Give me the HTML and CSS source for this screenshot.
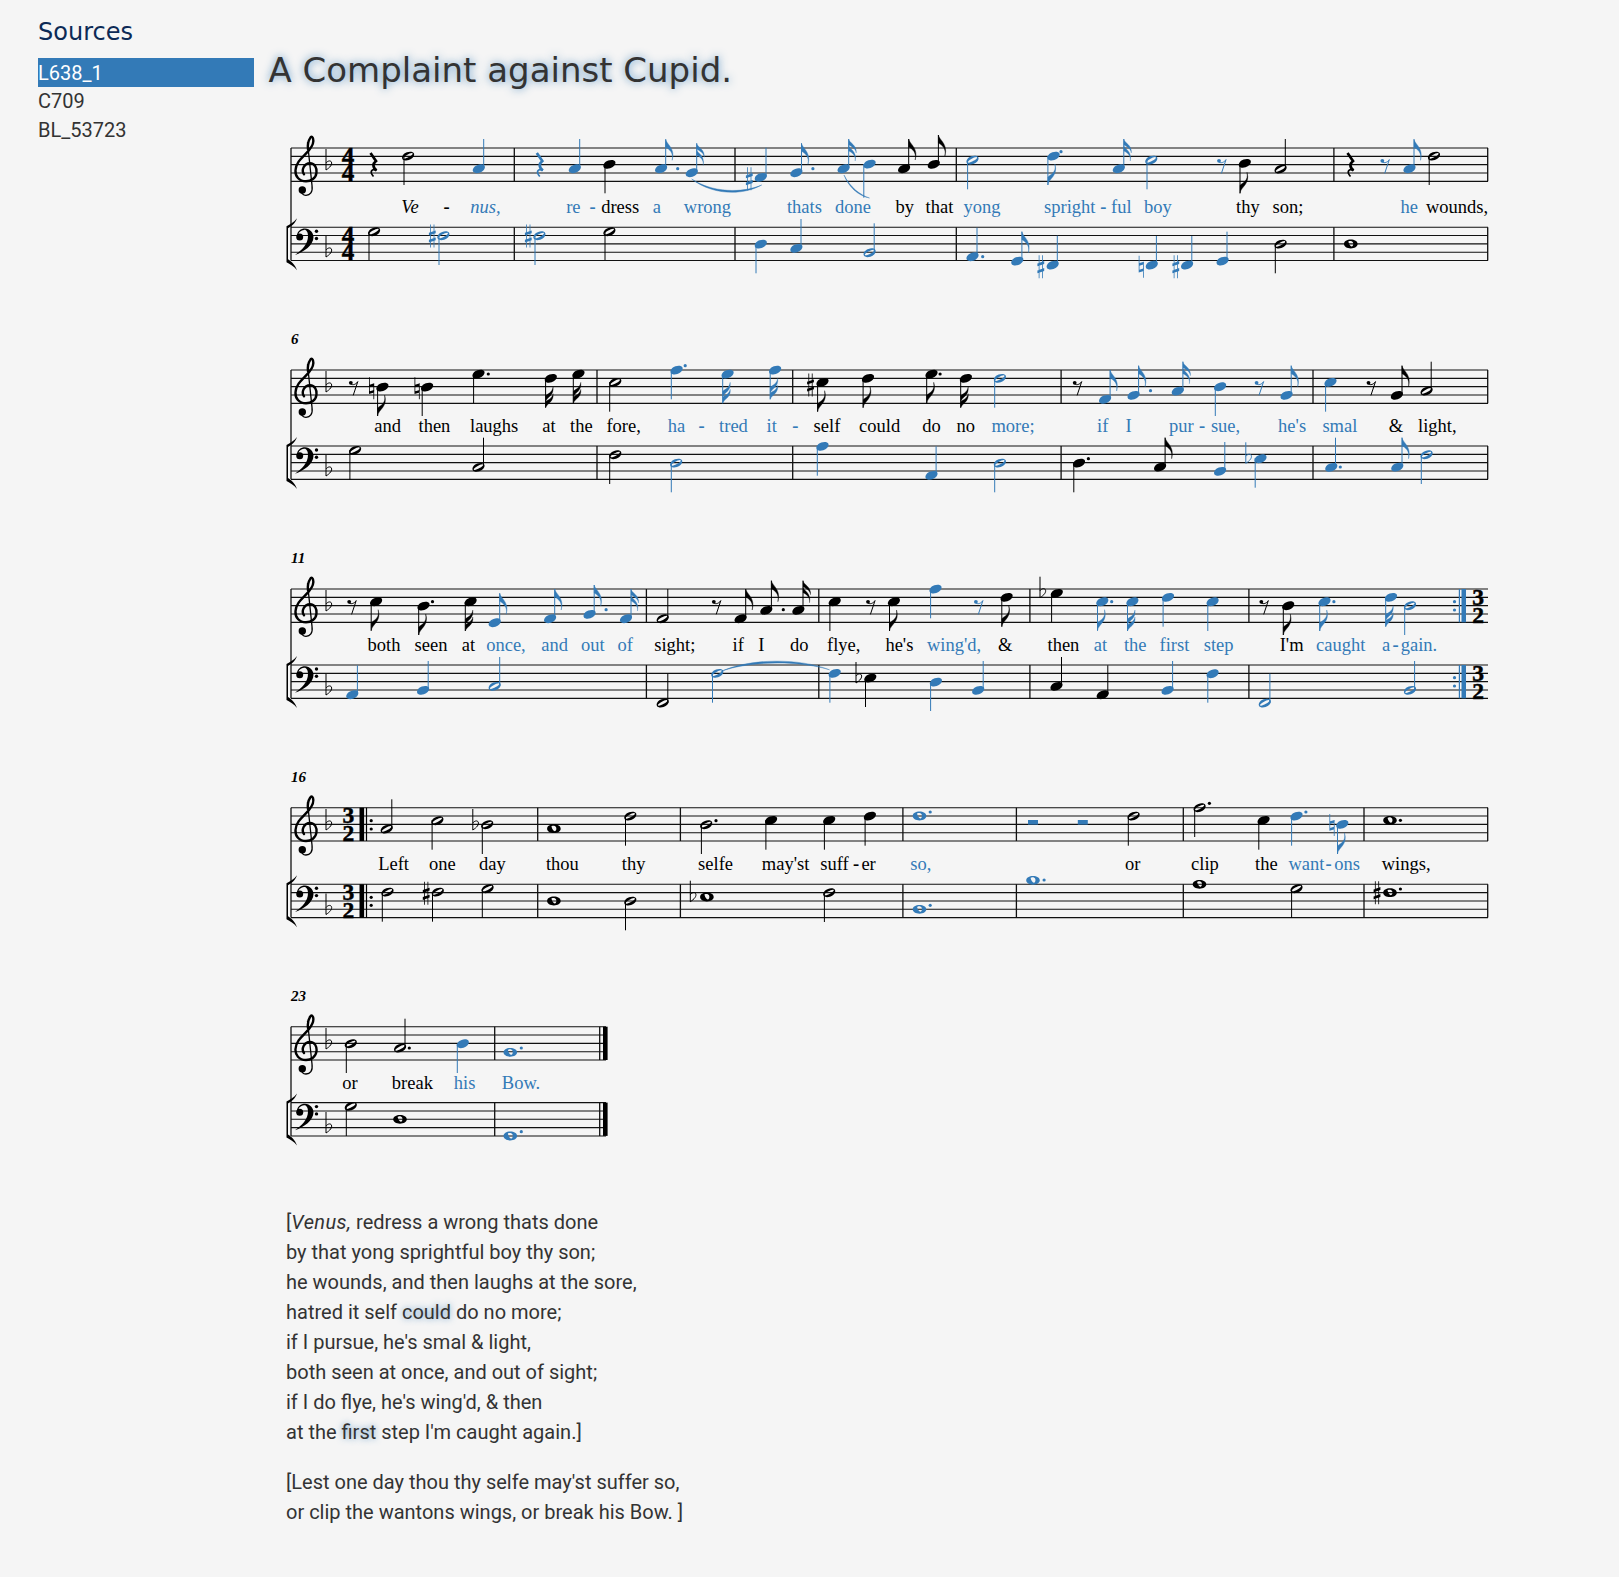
FILE: index.html
```html
<!DOCTYPE html>
<html lang="en">
<head>
<meta charset="utf-8">
<title>A Complaint against Cupid.</title>
<link rel="stylesheet" href="styles.css">
</head>
<body>
<svg class="glyphs" width="0" height="0" aria-hidden="true">
<defs>
<path id="staff" class="staffline" d="M0 0H1197M0 8.33H1197M0 16.67H1197M0 25H1197M0 33.33H1197"/>
<path id="staff-short" class="staffline" d="M0 0H315M0 8.33H315M0 16.67H315M0 25H315M0 33.33H315"/>
<g id="treble">
<path fill="none" stroke="#000" stroke-width="1.3" d="M16.5 -5.7L21 37.3C22 44.3 19 47.3 15 47.3C12 47.3 10 45.3 10.5 42.3"/>
<circle fill="#000" cx="11.3" cy="42" r="3.7"/>
<path fill="none" stroke="#000" stroke-width="2.4" stroke-linecap="round" d="M13 26.3C10 22.3 13 15.3 19 15.3C24 15.3 26 20.3 25.5 24.3C25 30.3 20 33.3 15 33.3C8 33.3 4 28.3 4.5 22.3C5 13.3 13 8.3 18 2.3C22 -2.7 23 -6.7 22 -9.7C21 -11.7 20 -11.7 19 -9.7C17 -6.7 16.5 -2.7 17 1.3"/>
</g>
<g id="bass" fill="#000">
<path d="M6 8.7C6 3.7 10 1.2 14 1.2C19 1.2 22.5 5.7 22.5 9.7C22.5 17.7 13 24.7 4 27.7C11 22.7 17 16.7 17 8.7C17 4.7 15 2.2 13 2.7C10 3.2 8 4.7 7.5 6.7Z"/>
<circle cx="8.7" cy="9.7" r="3.5"/>
<circle cx="25.5" cy="4" r="1.7"/>
<circle cx="25.5" cy="11.3" r="1.7"/>
</g>
<path id="bracket" fill="#000" d="M-4.5 -1C-1 -3 3 -5 6 -9C4 -3 0 -1 -3 1V32C0 34 4 37 6 43C3 39 -1 37 -4.5 35Z"/>
<path id="q" d="M-5.6 2.9C-7 .2 -4 -2.9 -1.1 -3.8C2.2 -4.9 5.3 -4.3 6 -2.5C6.9 .2 3.8 3.1 .9 4C-2.2 4.9 -4.9 4.3 -5.6 2.9Z"/>
<path id="h" fill-rule="evenodd" d="M-5.6 2.9C-7 .2 -4 -2.9 -1.1 -3.8C2.2 -4.9 5.3 -4.3 6 -2.5C6.9 .2 3.8 3.1 .9 4C-2.2 4.9 -4.9 4.3 -5.6 2.9ZM-4.5 2.4C-3.6 3.2 -1.1 2 1.1 .8C3.4 -.4 5 -1.7 4.6 -2.6C4 -3.5 1.3 -2.4 -1.1 -1.1C-3.4 .2 -5.2 1.5 -4.5 2.4Z"/>
<path id="w" fill-rule="evenodd" d="M-6.8 0C-6.8 -2.6 -3.7 -4.4 0 -4.4C3.7 -4.4 6.8 -2.6 6.8 0C6.8 2.6 3.7 4.4 0 4.4C-3.7 4.4 -6.8 2.6 -6.8 0ZM-2.4 -2.2C-1.6 .8 -.2 2.8 1.2 2.4C2.5 2 2.8 -.4 2.1 -1.8C1.4 -3 -.6 -3.2 -1.5 -2.9C-2 -2.7 -2.5 -2.5 -2.4 -2.2Z"/>
<circle id="d" r="1.6"/>
<path id="f8u" stroke="currentColor" stroke-width=".4" d="M0 0C.8 5 10 9 6.5 21C8 13 3.5 10 0 8Z"/>
<path id="f8d" stroke="currentColor" stroke-width=".4" d="M0 0C1 -7 10.5 -9 7 -21C8.5 -12 3 -11 0 -8Z"/>
<path id="f16u" stroke="currentColor" stroke-width=".3" d="M0 0C.5 4 8.5 6 7.5 14C7.3 10 3 7.5 0 6ZM0 6.5C.5 10 8.5 12 6.5 22C7.2 16 3 13.5 0 12Z"/>
<path id="f16d" stroke="currentColor" stroke-width=".3" d="M0 0C2 -5 8.5 -6 7.5 -14C6.5 -9 2 -8 0 -6ZM0 -6.5C2 -11 8.5 -12 7.5 -21C6.5 -15 2 -14 0 -12Z"/>
<path id="flat" fill="none" stroke="currentColor" stroke-width="1" d="M0 -16V5C4 2.5 6.5 -.5 5.4 -3C4.3 -5 1.5 -4 0 -2"/>
<path id="sharp" d="M-2.1 -11.5H-1.3V11.5H-2.1ZM1.3 -11.5H2.1V11.5H1.3ZM-3.4 -3.2L3.4 -5.6V-2.8L-3.4 -.4ZM-3.4 3.8L3.4 1.4V4.2L-3.4 6.6Z"/>
<path id="natural" d="M-2.6 -11H-1.8V5H-2.6ZM1.8 -5H2.6V11H1.8ZM-2.6 -3.4L2.6 -5V-2.4L-2.6 -.8ZM-2.6 3.2L2.6 1.6V4.2L-2.6 5.8Z"/>
<g id="r4" fill="none" stroke="currentColor">
<path stroke-width="2.7" d="M-2.5 -11.5L3 -3.5C0 -1 -1 2 3.5 6"/>
<path stroke-width="1.7" d="M3.5 6C-1 3.5 -4 7 .5 12"/>
</g>
<g id="r8">
<circle cx="-3" cy="-5.2" r="1.9"/>
<path fill="none" stroke="currentColor" stroke-width="1" d="M-3 -4C-1 -2.6 2 -3.4 4 -6.4L-.6 7.4"/>
</g>
</defs>
</svg>
<div class="page">
<aside class="sidebar">
<h2 class="sources-title">Sources</h2>
<ul class="sources">
<li class="source active">L638_1</li>
<li class="source">C709</li>
<li class="source">BL_53723</li>
</ul>
</aside>
<main class="main">
<h1 class="title">A Complaint against Cupid.</h1>

<svg class="system s1" viewBox="270 120 1230 210">
<use href="#staff" x="291" y="148"/><use href="#staff" x="291" y="227.2"/>
<path class="bars" d="M291 148V260.5M514.3 148V181.3M514.3 227.2V260.5M735 148V181.3M735 227.2V260.5M956.3 148V181.3M956.3 227.2V260.5M1333.9 148V181.3M1333.9 227.2V260.5M1487.7 148V181.3M1487.7 227.2V260.5"/>
<use href="#treble" x="291" y="148"/><use href="#bass" x="291" y="227.2"/><use href="#bracket" x="291" y="227.2"/>
<g class="ink">
<use href="#flat" x="326" y="165"/><use href="#flat" x="326" y="252"/>
<text class="meter" x="348" y="142.5">44</text>
<text class="meter" x="348" y="221.7">44</text>
<use href="#r4" x="373" y="164.5"/>
<use href="#h" x="408" y="156"/><use href="#q" x="609.3" y="164.3"/>
<use href="#q" x="904" y="168.7"/><use href="#f8u" x="908.7" y="139"/>
<use href="#q" x="933.7" y="164.3"/><use href="#f8u" x="938.4" y="135"/>
<use href="#q" x="1244.7" y="163.3"/><use href="#f8d" x="1240" y="193.3"/>
<use href="#h" x="1280.5" y="169"/>
<use href="#r4" x="1350" y="164.5"/>
<use href="#h" x="1433.9" y="156"/>
<use href="#h" x="374" y="231.7"/><use href="#h" x="609.3" y="231.7"/>
<use href="#h" x="1280.5" y="244"/><use href="#w" x="1350.8" y="244"/>
<path class="stems" d="M404 156V185M605 164V193.3M908.7 168V139M938.4 164V135M1240 164V193.3M1285.3 168V139M1429.2 156V185M369 232V260M605 232V260M1275.3 244V273.3"/>
</g>
<g class="blue">
<use href="#q" x="478.7" y="168.7"/><use href="#r4" x="539.3" y="164.5"/>
<use href="#q" x="574.7" y="168.7"/>
<use href="#q" x="661" y="168.7"/><use href="#f8u" x="665.7" y="139.3"/><use href="#d" x="677.7" y="168.7"/>
<use href="#q" x="691.7" y="172.7"/><use href="#f16u" x="696.7" y="143.3"/>
<use href="#sharp" x="749.3" y="178.7"/><use href="#q" x="760.7" y="177.3"/>
<use href="#q" x="796.3" y="172.7"/><use href="#f8u" x="801.5" y="143.3"/><use href="#d" x="812.9" y="168.7"/>
<use href="#q" x="843.5" y="168.7"/><use href="#f16u" x="848.7" y="139"/>
<use href="#q" x="869.5" y="164"/>
<use href="#h" x="972.4" y="160"/>
<use href="#q" x="1053.5" y="156"/><use href="#f8d" x="1047.9" y="185"/><use href="#d" x="1061" y="151.7"/>
<use href="#q" x="1118.7" y="168.7"/><use href="#f16u" x="1123.8" y="139"/>
<use href="#h" x="1151.2" y="160"/>
<use href="#r8" x="1222" y="166"/><use href="#r8" x="1385.3" y="166"/>
<use href="#q" x="1409.4" y="168.7"/><use href="#f8u" x="1414" y="139.3"/>
<use href="#sharp" x="432.3" y="236"/><use href="#h" x="443.3" y="235.7"/>
<use href="#sharp" x="528.3" y="236"/><use href="#h" x="539.3" y="235.7"/>
<use href="#q" x="760.7" y="244"/><use href="#q" x="796.3" y="248.3"/><use href="#h" x="869.5" y="252.7"/>
<use href="#q" x="972.4" y="256.7"/><use href="#d" x="982.7" y="256.7"/>
<use href="#q" x="1017.2" y="261"/><use href="#f8u" x="1021.9" y="231.7"/>
<use href="#sharp" x="1040.8" y="266.7"/><use href="#q" x="1052.6" y="265"/>
<use href="#natural" x="1141.3" y="266.7"/><use href="#q" x="1151.7" y="265"/>
<use href="#sharp" x="1175.8" y="266.7"/><use href="#q" x="1187" y="265"/>
<use href="#q" x="1222.5" y="261"/>
<path class="stems" d="M483.7 168V139M579.7 168V139M665.7 168V139.3M696.7 172V143.3M766 177V147.7M801.5 172V143.3M848.7 168V139M863.8 164V197.7M967.6 160V189.3M1047.9 156V185M1123.8 168V139M1147 160V189.3M1414 168V139.3M439 236V265M535 236V265M756 244V273.3M801 248V219M874.2 252V223.3M977 256V227.7M1021.9 260V231.7M1057.3 264V235.7M1156.4 264V236M1191.8 264V236M1227 260V231.7"/>
<path class="slur" d="M691.7 179C712 195 742 196 761.7 185C742 193.5 712 192.5 691.7 179Z"/>
<path class="slur" d="M844 175C848 186 858 196 869.5 198C860 195 850 187 844 175Z"/>
</g>
<text class="lyric it" x="401.7" y="212.7">Ve</text><text class="lyric hy" x="444" y="212.7">-</text>
<text class="lyric it b" x="470.7" y="212.7">nus,</text>
<text class="lyric b" x="566.7" y="212.7">re</text><text class="lyric hy b" x="590" y="212.7">-</text>
<text class="lyric" x="601.7" y="212.7">dress</text>
<text class="lyric b" x="653.3" y="212.7">a</text><text class="lyric b" x="684.3" y="212.7">wrong</text>
<text class="lyric b" x="787.4" y="212.7">thats</text><text class="lyric b" x="835.5" y="212.7">done</text>
<text class="lyric" x="895.9" y="212.7">by</text><text class="lyric" x="926.1" y="212.7">that</text>
<text class="lyric b" x="963.9" y="212.7">yong</text><text class="lyric b" x="1044.6" y="212.7">spright</text>
<text class="lyric hy b" x="1100.7" y="212.7">-</text><text class="lyric b" x="1111.6" y="212.7">ful</text>
<text class="lyric b" x="1144.6" y="212.7">boy</text>
<text class="lyric" x="1236.6" y="212.7">thy</text><text class="lyric" x="1273" y="212.7">son;</text>
<text class="lyric b" x="1400.9" y="212.7">he</text><text class="lyric" x="1426.4" y="212.7">wounds,</text>
</svg>

<svg class="system s2" viewBox="270 330 1230 219">
<use href="#staff" x="291" y="370"/><use href="#staff" x="291" y="446"/>
<path class="bars" d="M291 370V479.3M597 370V403.3M597 446V479.3M792.7 370V403.3M792.7 446V479.3M1061.1 370V403.3M1061.1 446V479.3M1313 370V403.3M1313 446V479.3M1487.7 370V403.3M1487.7 446V479.3"/>
<use href="#treble" x="291" y="370"/><use href="#bass" x="291" y="446"/><use href="#bracket" x="291" y="446"/>
<text class="measure" x="291" y="344">6</text>
<g class="ink">
<use href="#flat" x="326" y="387"/><use href="#flat" x="326" y="471"/>
<use href="#r8" x="353.8" y="388"/>
<use href="#natural" x="371.6" y="388.3"/><use href="#q" x="382.3" y="387"/><use href="#f8d" x="377.6" y="416"/>
<use href="#natural" x="417.1" y="388.3"/><use href="#q" x="427" y="387"/>
<use href="#q" x="478.4" y="374"/><use href="#d" x="488.3" y="374"/>
<use href="#q" x="550.7" y="378.3"/><use href="#f16d" x="545.6" y="407.7"/>
<use href="#q" x="578.4" y="374"/><use href="#f16d" x="573.3" y="403.3"/>
<use href="#h" x="615.2" y="382.3"/>
<use href="#sharp" x="810.5" y="385"/><use href="#q" x="822.4" y="382.3"/><use href="#f8d" x="817.6" y="411.7"/>
<use href="#q" x="867.9" y="378.3"/><use href="#f8d" x="863.1" y="407.7"/>
<use href="#q" x="931.4" y="374"/><use href="#f8d" x="926.7" y="403.3"/><use href="#d" x="940.1" y="374"/>
<use href="#q" x="965.8" y="378.3"/><use href="#f16d" x="960.7" y="407.7"/>
<use href="#r8" x="1077.7" y="388"/><use href="#r8" x="1371.5" y="388"/>
<use href="#q" x="1396.8" y="395.3"/><use href="#f8u" x="1402" y="365.7"/>
<use href="#h" x="1426.5" y="391"/>
<use href="#h" x="355" y="450.3"/><use href="#h" x="478.4" y="467.3"/><use href="#h" x="615.2" y="454.7"/>
<use href="#q" x="1078.9" y="463"/><use href="#d" x="1088.4" y="458.7"/>
<use href="#q" x="1160" y="467"/><use href="#f8u" x="1165.1" y="437.7"/>
<path class="stems" d="M377.6 387V416M422.2 387V416M473.6 374V403.3M545.6 378V407.7M573.3 374V403.3M609.7 382V411.7M817.6 382V411.7M863.1 378V407.7M926.7 374V403.3M960.7 378V407.7M1402 395V365.7M1431.2 391V361.7M349.9 450V479.7M483.5 467V437.7M609.7 455V484M1073.8 463V492.3M1165.1 467V437.7"/>
</g>
<g class="blue">
<use href="#q" x="676.5" y="370"/><use href="#d" x="685.2" y="365.7"/>
<use href="#q" x="727.5" y="374"/><use href="#f16d" x="722.7" y="403.3"/>
<use href="#q" x="775" y="370"/><use href="#f16d" x="770.2" y="399.3"/>
<use href="#h" x="999.8" y="378.3"/>
<use href="#q" x="1105" y="399.3"/><use href="#f8u" x="1110.1" y="370"/>
<use href="#q" x="1133.5" y="395.3"/><use href="#f8u" x="1138.6" y="365.7"/><use href="#d" x="1150.5" y="390.7"/>
<use href="#q" x="1177.7" y="391"/><use href="#f16u" x="1182.9" y="361.7"/>
<use href="#q" x="1220" y="386.7"/><use href="#r8" x="1259.6" y="388"/>
<use href="#q" x="1286.5" y="395.3"/><use href="#f8u" x="1291.2" y="365.7"/>
<use href="#q" x="1330.4" y="382.3"/>
<use href="#h" x="676.1" y="463"/><use href="#q" x="822.4" y="446.3"/><use href="#q" x="931.4" y="475.3"/>
<use href="#h" x="999.8" y="463"/><use href="#q" x="1220" y="471.3"/>
<use href="#flat" x="1245.8" y="458.3"/><use href="#q" x="1260.4" y="458.7"/>
<use href="#q" x="1331.2" y="467.3"/><use href="#d" x="1340.3" y="467"/>
<use href="#q" x="1397.2" y="467"/><use href="#f8u" x="1402" y="437.7"/>
<use href="#h" x="1426.5" y="454.7"/>
<path class="stems" d="M671.3 370V399.3M722.7 374V403.3M770.2 370V399.3M994.7 378V407.7M1110.1 399V370M1138.6 395V365.7M1182.9 391V361.7M1215.3 386V416M1291.2 395V365.7M1325.6 382V411.7M671.3 463V492.3M817.3 446V475.7M936.1 475V446.3M994.7 463V492.3M1224.8 471V442M1255.2 458V487.7M1335.5 467V437.7M1402 467V437.7M1421.3 455V484"/>
</g>
<text class="lyric" x="374.8" y="431.7">and</text><text class="lyric" x="419" y="431.7">then</text>
<text class="lyric" x="470.5" y="431.7">laughs</text><text class="lyric" x="542.8" y="431.7">at</text>
<text class="lyric" x="570.5" y="431.7">the</text><text class="lyric" x="606.9" y="431.7">fore,</text>
<text class="lyric b" x="668.2" y="431.7">ha</text><text class="lyric hy b" x="699" y="431.7">-</text>
<text class="lyric b" x="719.6" y="431.7">tred</text><text class="lyric b" x="767" y="431.7">it</text>
<text class="lyric hy b" x="792.7" y="431.7">-</text><text class="lyric" x="814.1" y="431.7">self</text>
<text class="lyric" x="859.6" y="431.7">could</text><text class="lyric" x="922.7" y="431.7">do</text>
<text class="lyric" x="957.1" y="431.7">no</text><text class="lyric b" x="991.9" y="431.7">more;</text>
<text class="lyric b" x="1097.5" y="431.7">if</text><text class="lyric b" x="1126" y="431.7">I</text>
<text class="lyric b" x="1169.4" y="431.7">pur</text><text class="lyric hy b" x="1199.5" y="431.7">-</text>
<text class="lyric b" x="1211.4" y="431.7">sue,</text><text class="lyric b" x="1278.6" y="431.7">he's</text>
<text class="lyric b" x="1322.9" y="431.7">smal</text><text class="lyric" x="1389.3" y="431.7">&amp;</text>
<text class="lyric" x="1418.5" y="431.7">light,</text>
</svg>

<svg class="system s3" viewBox="270 549 1230 219">
<use href="#staff" x="291" y="589"/><use href="#staff" x="291" y="665"/>
<path class="bars" d="M291 589V698.3M646.4 589V622.3M646.4 665V698.3M818.8 589V622.3M818.8 665V698.3M1029.9 589V622.3M1029.9 665V698.3M1248.9 589V622.3M1248.9 665V698.3"/>
<use href="#treble" x="291" y="589"/><use href="#bass" x="291" y="665"/><use href="#bracket" x="291" y="665"/>
<text class="measure" x="291" y="563">11</text>
<g class="ink">
<use href="#flat" x="326" y="606"/><use href="#flat" x="326" y="690"/>
<use href="#r8" x="352.2" y="607"/>
<use href="#q" x="376" y="601.7"/><use href="#f8d" x="371.2" y="630.7"/>
<use href="#q" x="423.4" y="606"/><use href="#f8d" x="418.7" y="635"/><use href="#d" x="432.5" y="601.7"/>
<use href="#q" x="470.5" y="601.7"/><use href="#f16d" x="465.3" y="631"/>
<use href="#h" x="662.6" y="618.7"/><use href="#r8" x="716.8" y="607"/>
<use href="#q" x="740.5" y="618.7"/><use href="#f8u" x="745.7" y="589"/>
<use href="#q" x="766.2" y="610.3"/><use href="#f8u" x="771.4" y="580.7"/><use href="#d" x="783.3" y="609.7"/>
<use href="#q" x="798.3" y="610.3"/><use href="#f16u" x="803" y="580.7"/>
<use href="#q" x="834.6" y="601.7"/><use href="#r8" x="871" y="607"/>
<use href="#q" x="893.8" y="601.7"/><use href="#f8d" x="889.5" y="631"/>
<use href="#q" x="1006.5" y="597.3"/><use href="#f8d" x="1001.8" y="626.7"/>
<use href="#flat" x="1040" y="592.7"/><use href="#q" x="1056.7" y="593.3"/>
<use href="#r8" x="1264.3" y="607"/>
<use href="#q" x="1288.1" y="605.7"/><use href="#f8d" x="1283.3" y="635"/>
<text class="meter triple" x="1478" y="583.6">32</text>
<text class="meter triple" x="1478" y="659.6">32</text>
<use href="#h" x="662.6" y="703"/>
<use href="#flat" x="856" y="678"/><use href="#q" x="870.2" y="678"/>
<use href="#q" x="1056.4" y="686.3"/><use href="#q" x="1102.6" y="694.7"/>
<path class="stems" d="M371.2 602V630.7M418.7 606V635M465.3 602V631M667.8 618V589M745.7 618V589M771.4 610V580.7M803 610V580.7M829.9 602V631M889.5 602V631M1001.8 597V626.7M1051.6 593V622.3M1283.3 606V635M667.8 703V673.7M865.5 678V707M1061.5 686V657M1107.8 694V665.3"/>
</g>
<g class="blue">
<use href="#q" x="494.6" y="622.7"/><use href="#f8u" x="499.7" y="593.3"/>
<use href="#q" x="550" y="618.7"/><use href="#f8u" x="554.7" y="589"/>
<use href="#q" x="589.5" y="614.3"/><use href="#f8u" x="594.2" y="585"/><use href="#d" x="606.1" y="609.7"/>
<use href="#q" x="625.9" y="618.7"/><use href="#f16u" x="631" y="589"/>
<use href="#q" x="935.4" y="589"/><use href="#r8" x="978.9" y="607"/>
<use href="#q" x="1102.2" y="601.7"/><use href="#f8d" x="1097.5" y="630.7"/><use href="#d" x="1111.7" y="601.7"/>
<use href="#q" x="1132.3" y="601.7"/><use href="#f16d" x="1127.5" y="631"/>
<use href="#q" x="1167.9" y="597.3"/><use href="#q" x="1212.5" y="601.7"/>
<use href="#q" x="1324.4" y="601.7"/><use href="#f8d" x="1319.7" y="631"/><use href="#d" x="1333.9" y="601.7"/>
<use href="#q" x="1390.9" y="597.3"/><use href="#f16d" x="1385.7" y="626.7"/>
<use href="#h" x="1409.9" y="605.7"/>
<use href="#d" x="1454.5" y="601.7"/><use href="#d" x="1454.5" y="610"/>
<use href="#d" x="1454.5" y="677.7"/><use href="#d" x="1454.5" y="686"/>
<rect x="1458.8" y="589" width="1.2" height="33.3"/><rect x="1461.5" y="589" width="4.5" height="33.3"/>
<rect x="1458.8" y="665" width="1.2" height="33.3"/><rect x="1461.5" y="665" width="4.5" height="33.3"/>
<use href="#q" x="352.2" y="694.7"/><use href="#q" x="423" y="690.3"/><use href="#h" x="494.6" y="686.3"/>
<use href="#h" x="717.2" y="673.3"/><use href="#q" x="834.6" y="673.3"/>
<use href="#q" x="935.8" y="682"/><use href="#q" x="978.1" y="690.3"/>
<use href="#q" x="1167.5" y="690.3"/><use href="#q" x="1212.5" y="673.7"/>
<use href="#h" x="1264.7" y="703"/><use href="#h" x="1409.9" y="690.3"/>
<path class="stems" d="M499.7 622V593.3M554.7 618V589M594.2 614V585M631 618V589M930.6 589V618.3M1097.5 602V630.7M1127.5 602V631M1163.1 597V626.7M1207.8 602V631M1319.7 602V631M1385.7 597V626.7M1404.7 606V635M357.4 694V665.3M428.2 690V661M499.7 686V657M712.5 673V702.7M829.9 673V702.7M930.6 682V711M983.2 690V661M1172.6 690V661M1207.8 674V702.7M1269.9 703V673.7M1414.6 690V661"/>
<path class="slur" d="M720.8 671.5C750 658 800 658 829.5 669.8C800 660.5 750 660.5 720.8 671.5Z"/>
</g>
<text class="lyric" x="368" y="650.7">both</text><text class="lyric" x="415.1" y="650.7">seen</text>
<text class="lyric" x="462.2" y="650.7">at</text><text class="lyric b" x="486.7" y="650.7">once,</text>
<text class="lyric b" x="541.7" y="650.7">and</text><text class="lyric b" x="581.6" y="650.7">out</text>
<text class="lyric b" x="618" y="650.7">of</text><text class="lyric" x="654.7" y="650.7">sight;</text>
<text class="lyric" x="733" y="650.7">if</text><text class="lyric" x="758.7" y="650.7">I</text>
<text class="lyric" x="790.4" y="650.7">do</text><text class="lyric" x="827.5" y="650.7">flye,</text>
<text class="lyric" x="885.9" y="650.7">he's</text><text class="lyric b" x="927.4" y="650.7">wing'd,</text>
<text class="lyric" x="998.6" y="650.7">&amp;</text><text class="lyric" x="1048" y="650.7">then</text>
<text class="lyric b" x="1094.3" y="650.7">at</text><text class="lyric b" x="1124.4" y="650.7">the</text>
<text class="lyric b" x="1160" y="650.7">first</text><text class="lyric b" x="1204.2" y="650.7">step</text>
<text class="lyric" x="1280.2" y="650.7">I'm</text><text class="lyric b" x="1316.5" y="650.7">caught</text>
<text class="lyric b" x="1382.6" y="650.7">a</text><text class="lyric hy b" x="1393" y="650.7">-</text>
<text class="lyric b" x="1401.2" y="650.7">gain.</text>
</svg>

<svg class="system s4" viewBox="270 768 1230 219">
<use href="#staff" x="291" y="807.7"/><use href="#staff" x="291" y="884.3"/>
<path class="bars" d="M291 807.7V917.6M537.7 807.7V841M537.7 884.3V917.6M680.4 807.7V841M680.4 884.3V917.6M902.9 807.7V841M902.9 884.3V917.6M1016.4 807.7V841M1016.4 884.3V917.6M1183.3 807.7V841M1183.3 884.3V917.6M1364 807.7V841M1364 884.3V917.6M1487.7 807.7V841M1487.7 884.3V917.6"/>
<use href="#treble" x="291" y="807.7"/><use href="#bass" x="291" y="884.3"/><use href="#bracket" x="291" y="884.3"/>
<text class="measure" x="291" y="782">16</text>
<g class="ink">
<use href="#flat" x="326" y="825"/><use href="#flat" x="326" y="909.5"/>
<text class="meter triple" x="348.3" y="802.1">32</text>
<text class="meter triple" x="348.3" y="878.7">32</text>
<rect x="359.5" y="807.7" width="4.6" height="33.3"/><rect x="365.9" y="807.7" width="1.2" height="33.3"/>
<rect x="359.5" y="884.3" width="4.6" height="33.3"/><rect x="365.9" y="884.3" width="1.2" height="33.3"/>
<use href="#d" x="371.2" y="820.7"/><use href="#d" x="371.2" y="829"/><use href="#d" x="371.2" y="897.3"/><use href="#d" x="371.2" y="905.3"/>
<use href="#h" x="386.6" y="829"/><use href="#h" x="437.3" y="820.7"/>
<use href="#flat" x="472.8" y="825"/><use href="#h" x="487.1" y="824.7"/>
<use href="#w" x="553.9" y="828.7"/><use href="#h" x="630.2" y="816"/>
<use href="#h" x="706.1" y="824.7"/><use href="#d" x="716" y="820.7"/>
<use href="#q" x="771" y="820.3"/><use href="#q" x="829.1" y="820.3"/><use href="#q" x="869.8" y="816"/>
<use href="#h" x="1133.5" y="816"/>
<use href="#h" x="1199.5" y="807.7"/><use href="#d" x="1209.4" y="803.3"/>
<use href="#q" x="1263.5" y="820.3"/>
<use href="#w" x="1390" y="820.3"/><use href="#d" x="1400.4" y="820.3"/>
<use href="#h" x="387.4" y="892"/><use href="#sharp" x="426.2" y="893.3"/><use href="#h" x="437.7" y="892"/>
<use href="#h" x="487.5" y="888.7"/><use href="#w" x="553.9" y="901"/><use href="#h" x="630.2" y="901"/>
<use href="#flat" x="690.3" y="896.7"/><use href="#w" x="706.9" y="897"/>
<use href="#h" x="829.1" y="892.7"/><use href="#w" x="1199.5" y="884.3"/>
<use href="#h" x="1296.4" y="888.7"/>
<use href="#sharp" x="1377" y="892.7"/><use href="#w" x="1390" y="892.7"/><use href="#d" x="1400.4" y="889"/>
<path class="stems" d="M391.8 829V799.3M432.1 820V849.7M482.3 824V854M625.5 816V845.7M701.4 824V854M765.9 820V849.7M824.4 820V849.7M865.1 816V845.7M1128.3 816V845.7M1194.7 808V837M1258.8 820V849.7M382.3 892V921.7M432.5 892V921.7M482.3 889V918M625.5 901V930.3M824.4 893V922M1291.6 889V918"/>
</g>
<g class="blue">
<use href="#w" x="919.5" y="816"/><use href="#d" x="930.2" y="812"/>
<rect x="1028" y="820" width="10" height="4.6"/><rect x="1077.8" y="820" width="10" height="4.6"/>
<use href="#q" x="1296.4" y="816"/><use href="#d" x="1305.9" y="812"/>
<use href="#natural" x="1332" y="825"/><use href="#q" x="1342.2" y="824.3"/><use href="#f8d" x="1337.5" y="854"/>
<use href="#w" x="919.5" y="909.3"/><use href="#d" x="930.2" y="905.3"/>
<use href="#w" x="1033" y="880.3"/><use href="#d" x="1044.1" y="880"/>
<path class="stems" d="M1291.6 816V845.7M1337.5 824V854"/>
</g>
<text class="lyric" x="378.7" y="870">Left</text><text class="lyric" x="429.4" y="870">one</text>
<text class="lyric" x="479.6" y="870">day</text><text class="lyric" x="546.4" y="870">thou</text>
<text class="lyric" x="622.3" y="870">thy</text><text class="lyric" x="698.6" y="870">selfe</text>
<text class="lyric" x="762.3" y="870">may'st</text><text class="lyric" x="820.8" y="870">suff</text>
<text class="lyric hy" x="853.6" y="870">-</text><text class="lyric" x="861.9" y="870">er</text>
<text class="lyric b" x="910.8" y="870">so,</text><text class="lyric" x="1125.5" y="870">or</text>
<text class="lyric" x="1191.6" y="870">clip</text><text class="lyric" x="1255.6" y="870">the</text>
<text class="lyric b" x="1288.9" y="870">want</text><text class="lyric hy b" x="1326" y="870">-</text>
<text class="lyric b" x="1334.7" y="870">ons</text><text class="lyric" x="1382.2" y="870">wings,</text>
</svg>

<svg class="system s5" viewBox="270 987 1230 173">
<use href="#staff-short" x="291" y="1026.7"/><use href="#staff-short" x="291" y="1102.6"/>
<path class="bars" d="M291 1026.7V1135.9M494.7 1026.7V1060M494.7 1102.6V1135.9M599.7 1026.7V1060M599.7 1102.6V1135.9"/>
<use href="#treble" x="291" y="1026.7"/><use href="#bass" x="291" y="1102.6"/><use href="#bracket" x="291" y="1102.6"/>
<text class="measure" x="291" y="1001">23</text>
<g class="ink">
<use href="#flat" x="326" y="1044"/><use href="#flat" x="326" y="1128"/>
<rect x="603" y="1026.7" width="4.6" height="33.3"/><rect x="603" y="1102.6" width="4.6" height="33.3"/>
<use href="#h" x="350.7" y="1043.7"/>
<use href="#h" x="400" y="1048"/><use href="#d" x="409.3" y="1048"/>
<use href="#h" x="350.7" y="1106.3"/><use href="#w" x="400" y="1119.3"/>
<path class="stems" d="M346.3 1044V1073M405 1048V1018.7M346.3 1106V1136"/>
</g>
<g class="blue">
<use href="#q" x="462.7" y="1043.7"/>
<use href="#w" x="510.3" y="1052.3"/><use href="#d" x="521.3" y="1048"/>
<use href="#w" x="510.3" y="1136"/><use href="#d" x="521.3" y="1131.7"/>
<path class="stems" d="M457.3 1044V1073"/>
</g>
<text class="lyric" x="342.7" y="1088.7">or</text><text class="lyric" x="392.3" y="1088.7">break</text>
<text class="lyric b" x="454.3" y="1088.7">his</text><text class="lyric b" x="502.3" y="1088.7">Bow.</text>
</svg>

<section class="poem">
<p>[<em>Venus,</em> redress a wrong thats done<br>by that yong sprightful boy thy son;<br>he wounds, and then laughs at the sore,<br>hatred it self <span class="hl">could</span> do no more;<br>if I pursue, he's smal &amp; light,<br>both seen at once, and out of sight;<br>if I do flye, he's wing'd, &amp; then<br>at the <span class="hl">first</span> step I'm caught again.]</p>
<p>[Lest one day thou thy selfe may'st suffer so,<br>or clip the wantons wings, or break his Bow. ]</p>
</section>
</main>
</div>
</body>
</html>
```
FILE: styles.css
```css
html, body {
  margin: 0;
  background: #f5f5f5;
}
body {
  color: #333;
  font-family: Roboto, "Liberation Sans", sans-serif;
  font-size: 20px;
  line-height: 30px;
}
.glyphs {
  display: block;
}
.page {
  display: flex;
  align-items: flex-start;
  min-height: 1577px;
}
.sidebar {
  flex: 0 0 270px;
  box-sizing: border-box;
  padding: 16px 16px 0 38px;
}
.sources-title {
  margin: 0 0 9px;
  font: 400 24px/33px "DejaVu Sans", sans-serif;
  color: #0c2a56;
}
.sources {
  list-style: none;
  margin: 0;
  padding: 0;
}
.source {
  height: 29px;
  line-height: 29px;
}
.source.active {
  background: #337ab7;
  color: #fff;
  line-height: 30px;
}
.main {
  flex: 1 1 auto;
  min-width: 0;
}
.title {
  margin: 0 0 0 -1.5px;
  height: 120px;
  box-sizing: border-box;
  padding-top: 47px;
  font: 400 34px/46px "DejaVu Sans", sans-serif;
  color: #333;
  text-shadow: 0 0 8px rgba(51, 122, 183, .8);
}
.system {
  display: block;
  width: 1230px;
}
.s1 { height: 210px; }
.s2, .s3, .s4 { height: 219px; }
.s5 { height: 173px; }
.staffline {
  fill: none;
  stroke: #111;
  stroke-width: 1.1;
}
.bars {
  fill: none;
  stroke: #111;
  stroke-width: 1.3;
}
.stems {
  fill: none;
  stroke: currentColor;
  stroke-width: 1;
}
.ink {
  color: #000;
  fill: #000;
}
.blue {
  color: #337ab7;
  fill: #337ab7;
}
.slur {
  fill: #337ab7;
  stroke: #337ab7;
  stroke-width: .4;
}
.lyric {
  font: 18.5px "Liberation Serif", serif;
  fill: #000;
  transform: translateX(-.5px);
}
.lyric.it {
  font-style: italic;
}
.lyric.hy {
  font-weight: 700;
}
.lyric.b {
  fill: #337ab7;
}
.measure {
  font: italic 700 15px "Liberation Serif", serif;
  fill: #000;
}
.meter {
  font: 700 25px "Liberation Serif", serif;
  writing-mode: vertical-rl;
  text-orientation: upright;
  letter-spacing: -11px;
  stroke: #000;
  stroke-width: .5;
}
.meter.triple {
  font-size: 23.5px;
  letter-spacing: -7.7px;
}
.poem {
  margin: 47px 0 0 16px;
}
.poem p {
  margin: 0 0 20px;
}
.poem em {
  letter-spacing: .4px;
}
.hl {
  text-shadow: 0 0 6px rgba(51, 122, 183, .7);
}
```
